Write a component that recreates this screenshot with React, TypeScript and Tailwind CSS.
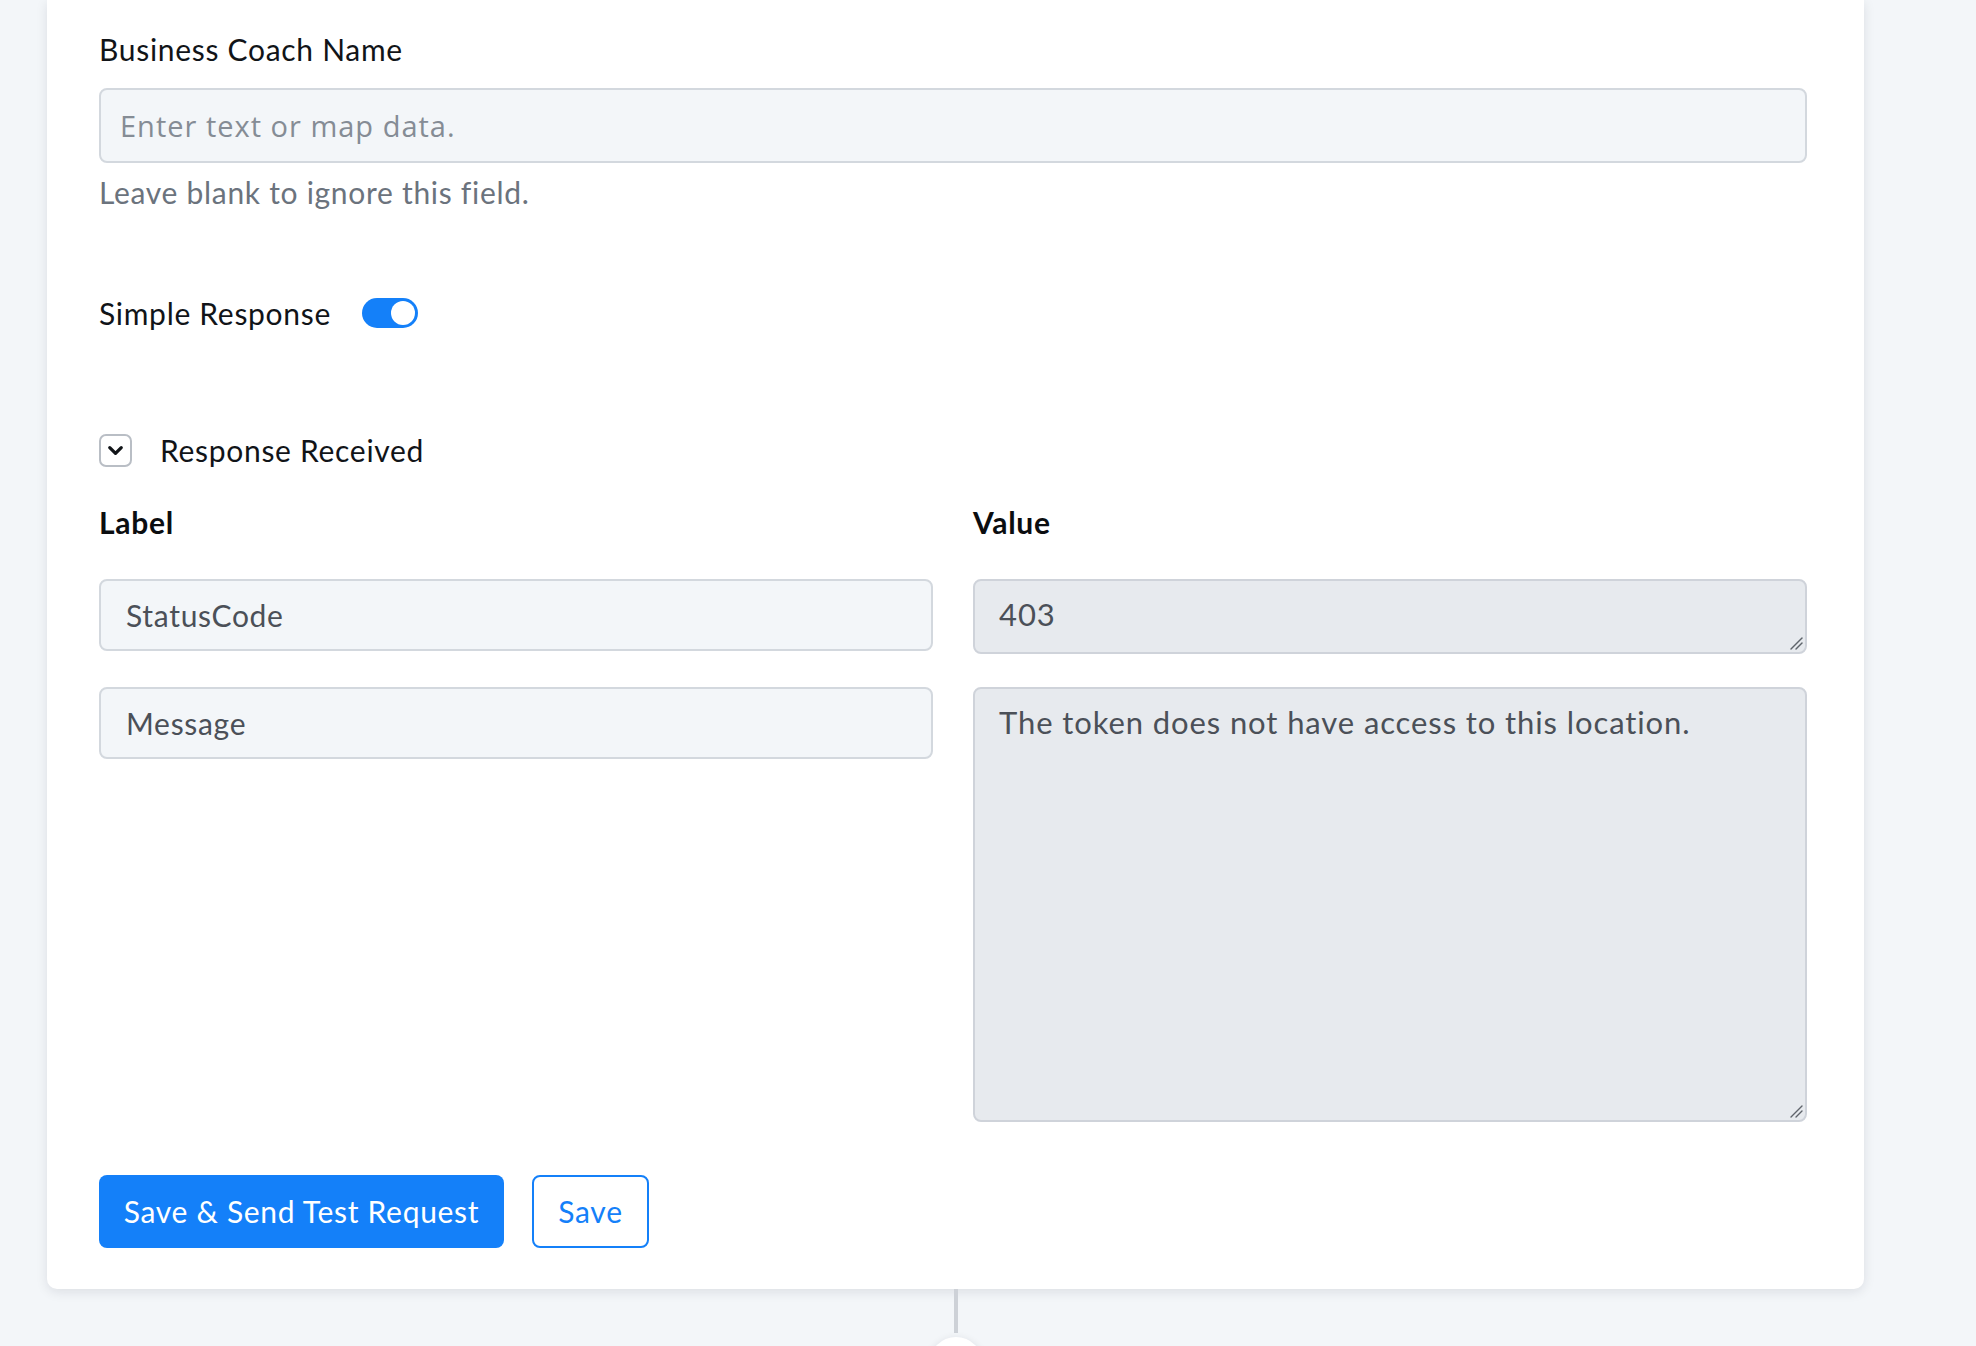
import { ChevronDown } from 'lucide-react';

// Response mapping step editor (bottom part of the card)

const font = "font-['Lato','Noto_Sans',sans-serif]";

function Toggle({ on }: { on: boolean }) {
  return (
    <div
      className={`flex h-[30px] w-[56px] items-center rounded-full p-[3px] ${
        on ? 'justify-end bg-[#1480f9]' : 'justify-start bg-[#d1d5db]'
      }`}
    >
      <div className="h-[24px] w-[24px] rounded-full bg-white" />
    </div>
  );
}

function ReadOnlyArea({ value, height }: { value: string; height: string }) {
  return (
    <div className="relative">
      <textarea
        readOnly
        defaultValue={value}
        className={`block w-full resize-none rounded-[8px] border-2 border-[#cfd3da] bg-[#e7eaee] px-[24px] pt-[15px] text-[31px] leading-[36px] tracking-[0.9px] text-[#4b5058] focus:outline-none ${height}`}
      />
      {/* resize grip */}
      <svg
        className="pointer-events-none absolute right-[4px] bottom-[4px] h-[14px] w-[14px] text-[#5f646b]"
        viewBox="0 0 14 14"
        fill="none"
        stroke="currentColor"
        strokeWidth="1.4"
        strokeLinecap="round"
      >
        <path d="M13 2 L2 13" />
        <path d="M13 7 L7 13" />
      </svg>
    </div>
  );
}

export default function App() {
  return (
    <div className={`h-[1346px] overflow-hidden bg-[#f3f6f9] tracking-[0.7px] ${font}`}>
      <div className="ml-[47px] w-[1817px] rounded-b-[10px] bg-white pt-[31px] pr-[57px] pb-[41px] pl-[52px] shadow-[0_3px_12px_rgba(15,23,42,0.10)]">
        {/* Business coach name */}
        <div className="text-[30px] leading-[36px] text-[#111418]">Business Coach Name</div>
        <input
          type="text"
          placeholder="Enter text or map data."
          className="mt-[21px] block h-[75px] w-full rounded-[8px] border-2 border-[#d3d8de] bg-[#f3f6f9] px-[19px] font-['Open_Sans',sans-serif] text-[29px] tracking-[1px] text-[#4b5058] placeholder:text-[#858c95] focus:outline-none"
        />
        <div className="mt-[12px] text-[30px] leading-[34px] text-[#6b737d]">
          Leave blank to ignore this field.
        </div>

        {/* Simple response */}
        <div className="mt-[86px] flex h-[36px] items-center gap-[31px]">
          <span className="text-[30px] leading-[36px] text-[#111418]">Simple Response</span>
          <Toggle on />
        </div>

        {/* Response received */}
        <div className="mt-[101px] flex h-[36px] items-center gap-[28px]">
          <div className="flex h-[33px] w-[33px] items-center justify-center rounded-[7px] border-2 border-[#b9bec5]">
            <ChevronDown size={23} strokeWidth={3.4} className="text-[#111418]" />
          </div>
          <span className="text-[30px] leading-[36px] text-[#111418]">Response Received</span>
        </div>

        <div className="mt-[36px] grid grid-cols-2 items-start gap-x-[40px] gap-y-[33px]">
          <div className="text-[30px] font-bold leading-[36px] text-[#0b0d10]">Label</div>
          <div className="text-[30px] font-bold leading-[36px] text-[#0b0d10]">Value</div>

          <input
            type="text"
            defaultValue="StatusCode"
            className="-mb-[6px] mt-[6px] block h-[72px] w-full rounded-[8px] border-2 border-[#d3d8de] bg-[#f3f6f9] px-[25px] text-[30px] text-[#4b5058] focus:outline-none"
          />
          <div className="mt-[6px]">
            <ReadOnlyArea value="403" height="h-[75px]" />
          </div>

          <input
            type="text"
            defaultValue="Message"
            className="block h-[72px] w-full rounded-[8px] border-2 border-[#d3d8de] bg-[#f3f6f9] px-[25px] text-[30px] text-[#4b5058] focus:outline-none"
          />
          <ReadOnlyArea value="The token does not have access to this location." height="h-[435px]" />
        </div>

        {/* Actions */}
        <div className="mt-[53px] flex items-center gap-[28px]">
          <button className="flex h-[73px] w-[405px] items-center justify-center rounded-[8px] bg-[#1480f9] text-[30px] text-white">
            Save &amp; Send Test Request
          </button>
          <button className="flex h-[73px] w-[117px] items-center justify-center rounded-[8px] border-2 border-[#1480f9] bg-white text-[30px] text-[#1480f9]">
            Save
          </button>
        </div>
      </div>

      {/* connector to next step */}
      <div className="ml-[47px] flex w-[1817px] flex-col items-center">
        <div className="h-[44px] w-[4px] bg-[#cdd1d7]" />
        <div className="mt-[4px] h-[54px] w-[54px] rounded-full bg-white shadow-[0_2px_8px_rgba(15,23,42,0.12)]" />
      </div>
    </div>
  );
}
